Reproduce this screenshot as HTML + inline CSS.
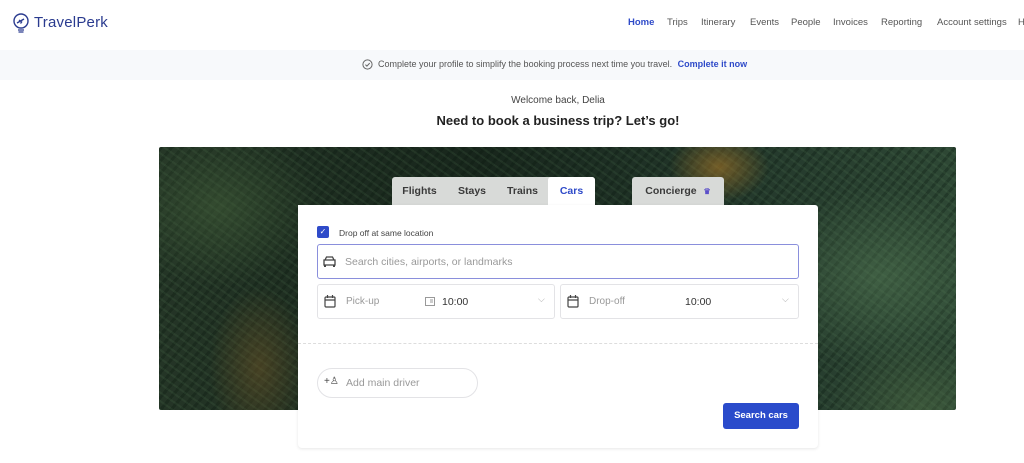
<!DOCTYPE html>
<html><head><meta charset="utf-8"><style>
*{margin:0;padding:0;box-sizing:border-box}
body{width:1024px;height:463px;overflow:hidden;background:#fff;font-family:"Liberation Sans",sans-serif;position:relative;color:#333}
.a{position:absolute}
.nav span{position:absolute;top:17px;font-size:9.5px;color:#555}
.jungle{left:159px;top:147px;width:797px;height:263px;border-radius:2px;
background:
radial-gradient(ellipse 50px 35px at 560px 20px,rgba(170,120,40,.6),transparent),
radial-gradient(ellipse 50px 80px at 100px 220px,rgba(120,90,40,.45),transparent),
radial-gradient(ellipse 120px 90px at 720px 130px,rgba(90,130,90,.45),transparent),
radial-gradient(ellipse 100px 80px at 60px 60px,rgba(70,100,60,.5),transparent),
radial-gradient(ellipse 90px 70px at 760px 260px,rgba(80,110,70,.45),transparent),
repeating-linear-gradient(35deg,rgba(90,130,90,.14) 0 2px,transparent 2px 7px),
repeating-linear-gradient(-50deg,rgba(10,25,15,.3) 0 3px,transparent 3px 8px),
linear-gradient(90deg,#243526,#18261c 40%,#22362a 70%,#2e4835)}
.tab{position:absolute;top:177px;height:29px;font-size:10.5px;font-weight:bold;color:#3a3a3a;line-height:29px;text-align:center}
.field{position:absolute;border:1px solid #e3e3e6;border-radius:3px;background:#fff}
</style></head><body>
<svg class="a" style="left:12px;top:13px" width="18" height="21" viewBox="0 0 18 21"><circle cx="9" cy="8" r="7" fill="none" stroke="#2a3b8f" stroke-width="1.4"/><path d="M5 10l7-4M7 7l2 1.5M8.5 10.5l1.5-2" stroke="#2a3b8f" stroke-width="1.4" fill="none"/><path d="M6 17h6M6.5 19h5" stroke="#2a3b8f" stroke-width="1.2"/></svg>
<div class="a" style="left:34px;top:14px;font-size:15px;color:#2a3b8f;letter-spacing:.2px">TravelPerk</div>
<div class="nav">
<span style="left:628px;color:#2f4bc9;font-weight:bold">Home</span>
<span style="left:667px">Trips</span><span style="left:701px">Itinerary</span><span style="left:750px">Events</span><span style="left:791px">People</span><span style="left:833px">Invoices</span><span style="left:881px">Reporting</span><span style="left:937px">Account settings</span><span style="left:1018px">H</span>
</div>
<div class="a" style="left:0;top:50px;width:1024px;height:30px;background:#f7f9fb"></div>
<svg class="a" style="left:362px;top:59px" width="11" height="11"><circle cx="5.5" cy="5.5" r="4.6" fill="none" stroke="#666" stroke-width="1"/><path d="M3.4 5.6l1.5 1.5 2.8-3" stroke="#666" fill="none"/></svg>
<div class="a" style="left:378px;top:59px;font-size:9px;color:#555">Complete your profile to simplify the booking process next time you travel. <b style="color:#2f4bc9;margin-left:3px">Complete it now</b></div>
<div class="a" style="left:0;width:1116px;top:95px;text-align:center;font-size:10px;color:#444">Welcome back, Delia</div>
<div class="a" style="left:0;width:1116px;top:113px;text-align:center;font-size:13px;font-weight:bold;color:#222">Need to book a business trip? Let’s go!</div>
<div class="a jungle"></div>
<div class="a" style="left:392px;top:177px;width:203px;height:29px;background:#d8dad8;border-radius:3px 3px 0 0"></div>
<div class="tab" style="left:392px;width:55px">Flights</div>
<div class="tab" style="left:447px;width:50px">Stays</div>
<div class="tab" style="left:497px;width:51px">Trains</div>
<div class="tab" style="left:548px;width:47px;background:#fff;color:#2f4bc9;border-radius:3px 3px 0 0">Cars</div>
<div class="tab" style="left:632px;width:92px;background:#d8dad8;border-radius:3px 3px 0 0">Concierge <span style="color:#5b4fc9;font-size:8px;margin-left:4px">♛</span></div>
<div class="a" style="left:298px;top:205px;width:520px;height:243px;background:#fff;border-radius:0 3px 4px 4px;box-shadow:0 1px 3px rgba(0,0,0,.1)"></div>
<div class="a" style="left:317px;top:226px;width:12px;height:12px;background:#2f4bc9;border-radius:2px;color:#fff;font-size:8px;text-align:center;line-height:12px">✓</div>
<div class="a" style="left:339px;top:228px;font-size:8.5px;color:#444">Drop off at same location</div>
<div class="field" style="left:317px;top:244px;width:482px;height:35px;border-color:#8a8fdc"></div>
<svg class="a" style="left:323px;top:256px" width="13" height="11"><path d="M2 4l1.5-3h6L11 4M1 4h11v5H1z" fill="none" stroke="#444" stroke-width="1.3"/><path d="M1 9v2h2V9M10 9v2h2V9" fill="#444"/></svg>
<div class="a" style="left:345px;top:256px;font-size:10.5px;color:#999">Search cities, airports, or landmarks</div>
<div class="field" style="left:317px;top:284px;width:238px;height:35px"></div>
<div class="field" style="left:560px;top:284px;width:239px;height:35px"></div>
<svg class="a" style="left:324px;top:295px" width="12" height="13"><rect x="1" y="2" width="10" height="10" rx="1" fill="none" stroke="#444" stroke-width="1.2"/><path d="M1 5h10M3.5 0v3M8.5 0v3" stroke="#444" stroke-width="1.2"/></svg>
<svg class="a" style="left:567px;top:295px" width="12" height="13"><rect x="1" y="2" width="10" height="10" rx="1" fill="none" stroke="#444" stroke-width="1.2"/><path d="M1 5h10M3.5 0v3M8.5 0v3" stroke="#444" stroke-width="1.2"/></svg>
<div class="a" style="left:346px;top:296px;font-size:10px;color:#999">Pick-up</div>
<svg class="a" style="left:425px;top:297px" width="10" height="9"><rect x=".5" y=".5" width="9" height="8" fill="none" stroke="#999"/><path d="M5 3h3M5 5h3" stroke="#999"/></svg>
<div class="a" style="left:442px;top:296px;font-size:10.5px;color:#333">10:00</div>
<div class="a" style="left:538px;top:294px;font-size:9px;color:#aaa">⌵</div>
<div class="a" style="left:589px;top:296px;font-size:10px;color:#999">Drop-off</div>
<div class="a" style="left:685px;top:296px;font-size:10.5px;color:#333">10:00</div>
<div class="a" style="left:782px;top:294px;font-size:9px;color:#aaa">⌵</div>
<div class="a" style="left:298px;top:343px;width:520px;border-top:1px dashed #ddd"></div>
<div class="a" style="left:317px;top:368px;width:161px;height:30px;border:1px solid #e3e3e6;border-radius:15px"></div>
<div class="a" style="left:324px;top:376px;font-size:10px;color:#444">+♙</div>
<div class="a" style="left:346px;top:377px;font-size:10.5px;color:#999">Add main driver</div>
<div class="a" style="left:723px;top:403px;width:76px;height:26px;background:#2a4bcb;border-radius:3px;color:#fff;font-size:9.5px;font-weight:bold;text-align:center;line-height:26px">Search cars</div>
</body></html>
